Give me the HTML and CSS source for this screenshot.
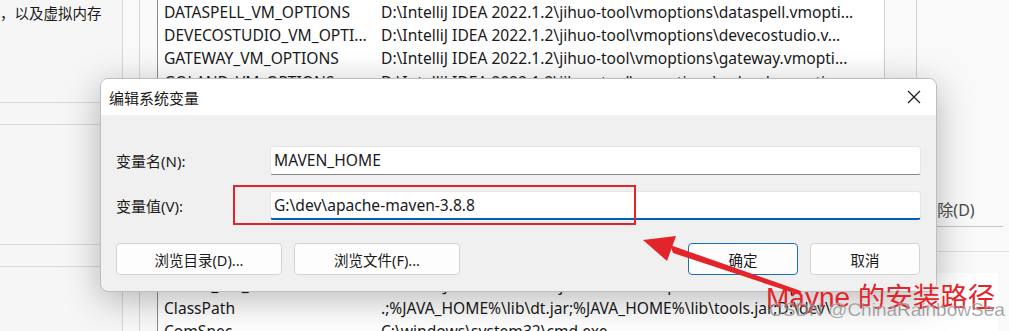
FILE: index.html
```html
<!DOCTYPE html>
<html lang="zh-CN">

<head>
    <meta charset="UTF-8">
    <title>编辑系统变量</title>
    <link rel="stylesheet" href="styles.css">
</head>

<body>
    <div class="desk">
        <div class="side">
            <p class="side-text">，以及虚拟内存</p>
            <div class="side-box side-box-top"></div>
            <div class="side-box side-box-low"></div>
        </div>
        <div class="rail"></div>
        <div class="main">
            <div class="top-section">
                <div class="var-list">
                    <div class="row"><span class="col-name">DATASPELL_VM_OPTIONS</span><span class="col-value">D:\IntelliJ IDEA 2022.1.2\jihuo-tool\vmoptions\dataspell.vmopti...</span></div>
                    <div class="row"><span class="col-name">DEVECOSTUDIO_VM_OPTI...</span><span class="col-value">D:\IntelliJ IDEA 2022.1.2\jihuo-tool\vmoptions\devecostudio.v...</span></div>
                    <div class="row"><span class="col-name">GATEWAY_VM_OPTIONS</span><span class="col-value">D:\IntelliJ IDEA 2022.1.2\jihuo-tool\vmoptions\gateway.vmopti...</span></div>
                    <div class="row"><span class="col-name">GOLAND_VM_OPTIONS</span><span class="col-value">D:\IntelliJ IDEA 2022.1.2\jihuo-tool\vmoptions\goland.vmoptio...</span></div>
                </div>
                <div class="scroll-rail"></div>
            </div>
            <div class="mid-section">
                <div class="bg-buttons">
                    <div class="bg-button">删除(D)</div>
                </div>
                <div class="bg-rule"></div>
            </div>
            <div class="var-list var-list-low">
                <div class="row"><span class="col-name">CLION_VM_OPTIONS</span><span class="col-value">D:\IntelliJ IDEA 2022.1.2\jihuo-tool\vmoptions\clion.vmoptions</span></div>
                <div class="row"><span class="col-name">ClassPath</span><span class="col-value">.;%JAVA_HOME%\lib\dt.jar;%JAVA_HOME%\lib\tools.jar;D:\dev\</span></div>
                <div class="row"><span class="col-name">ComSpec</span><span class="col-value">C:\windows\system32\cmd.exe</span></div>
            </div>
        </div>
    </div>

    <div class="dialog">
        <div class="dialog-title">
            <span>编辑系统变量</span>
            <svg class="close-icon" width="14" height="14" viewBox="0 0 14 14">
                <path d="M1 1 L13 13 M13 1 L1 13" stroke="#1a1a1a" stroke-width="1.2" fill="none" />
            </svg>
        </div>
        <div class="dialog-body">
            <div class="field">
                <label class="field-label">变量名(N):</label>
                <div class="field-input">MAVEN_HOME</div>
            </div>
            <div class="field">
                <label class="field-label">变量值(V):</label>
                <div class="field-input field-input-active">G:\dev\apache-maven-3.8.8</div>
            </div>
            <div class="dialog-actions">
                <div class="action-group">
                    <button class="btn btn-wide">浏览目录(D)...</button>
                    <button class="btn btn-wide">浏览文件(F)...</button>
                </div>
                <div class="action-group">
                    <button class="btn btn-ok">确定</button>
                    <button class="btn">取消</button>
                </div>
            </div>
        </div>
    </div>

    <!-- annotations drawn on top of the screenshot -->
    <div class="mark-box"></div>
    <svg class="arrow" width="1009" height="331" viewBox="0 0 1009 331">
        <polygon points="643,240 676,236 667,261" fill="#e3242b" />
        <polygon points="670,245 673,253 800,295 801,291" fill="#e3242b" />
    </svg>
    <div class="note">Mayne <span class="note-cjk">的安装路径</span></div>
    <div class="watermark">CSDN @ChinaRainbowSea</div>
</body>

</html>
```

FILE: styles.css
```css
body {
    margin: 0;
    font-family: "Noto Sans", "Noto Sans CJK SC", sans-serif;
    color: #1a1a1a;
    background-color: #f3f3f3;
    overflow: hidden;
}

.desk {
    display: flex;
    height: 331px;
    width: 1009px;
    overflow: hidden;
    background-color: #f9f9f9;
}

.side {
    width: 122px;
    flex-shrink: 0;
    border-right: 1px solid #d6d6d6;
    background-color: #f6f6f6;
    overflow: hidden;
}

.side-text {
    margin: 1px 0 0 0;
    font-size: 14.5px;
    line-height: 24px;
    white-space: nowrap;
}

.side-box {
    border-top: 1px solid #d8d8d8;
    border-bottom: 1px solid #d8d8d8;
    height: 21px;
}

.side-box-top {
    margin-top: 77px;
}

.side-box-low {
    margin-top: 119px;
}

.rail {
    width: 16px;
    flex-shrink: 0;
    border-right: 1px solid #d6d6d6;
}

.main {
    flex: 1;
    display: flex;
    flex-direction: column;
    padding-left: 17px;
    min-width: 0;
}

.top-section {
    display: flex;
    height: 165px;
}

.var-list {
    width: 726px;
    flex-shrink: 0;
    background-color: #fff;
    border-left: 1px solid #8a8a8a;
    border-right: 1px solid #d0d0d0;
    overflow: hidden;
}

.row {
    display: flex;
    height: 23.4px;
    align-items: center;
    font-size: 15.6px;
    white-space: nowrap;
}

.col-name {
    width: 217px;
    padding-left: 6px;
    flex-shrink: 0;
    overflow: hidden;
}

.col-value {
    overflow: hidden;
}

.scroll-rail {
    width: 31px;
    border-right: 1px solid #d0d0d0;
}

.mid-section {
    height: 108px;
    display: flex;
    flex-direction: column;
}

.bg-buttons {
    display: flex;
    justify-content: flex-end;
    margin-top: 30px;
}

.bg-button {
    width: 110px;
    height: 31px;
    margin-right: 6px;
    border-bottom: 1px solid #c4c4c4;
    font-size: 16px;
    line-height: 31px;
    text-align: center;
    color: #4a4a4a;
}

.bg-rule {
    margin-top: 24px;
    border-top: 1px solid #dedede;
}

.var-list-low {
    width: 840px;
    flex: 1;
    border-right: none;
}

/* dialog window */
.dialog {
    position: absolute;
    left: 100px;
    top: 78px;
    width: 835px;
    height: 212px;
    border: 1px solid #bdbdbd;
    border-radius: 8px;
    background-color: #f0f0f0;
    box-shadow: 0 8px 36px rgba(0, 0, 0, 0.28);
    overflow: hidden;
}

.dialog-title {
    display: flex;
    justify-content: space-between;
    align-items: center;
    height: 36px;
    padding: 0 15px 0 8px;
    background-color: #fff;
    font-size: 15px;
}

.close-icon {
    display: block;
}

.dialog-body {
    padding: 31px 15px 0 15px;
}

.field {
    display: flex;
    align-items: center;
    margin-bottom: 16px;
}

.field-label {
    width: 154px;
    font-size: 15px;
}

.field-input {
    flex: 1;
    height: 27px;
    padding-left: 3px;
    background-color: #fff;
    border: 1px solid #e6e6e6;
    border-bottom-color: #868686;
    border-radius: 3px;
    font-size: 15.6px;
    line-height: 27px;
}

.field-input-active {
    border-bottom: 2px solid #005fb8;
    height: 26px;
}

.dialog-actions {
    display: flex;
    justify-content: space-between;
    margin-top: 23px;
    padding-right: 1px;
}

.action-group {
    display: flex;
    gap: 12px;
}

.btn {
    width: 110px;
    height: 32px;
    padding: 0;
    border: 1px solid #d3d3d3;
    border-radius: 4px;
    background-color: #fdfdfd;
    font-family: inherit;
    font-size: 14.5px;
    color: #1a1a1a;
}

.btn-wide {
    width: 166px;
}

.btn-ok {
    border-color: #1a6dc0;
}

/* annotations */
.mark-box {
    position: absolute;
    left: 233px;
    top: 185px;
    width: 399px;
    height: 36px;
    border: 2px solid #e3242b;
}

.arrow {
    position: absolute;
    left: 0;
    top: 0;
}

.note {
    position: absolute;
    left: 766px;
    top: 277px;
    font-family: "Liberation Sans", "Noto Sans CJK SC", sans-serif;
    font-size: 28px;
    line-height: 36px;
    color: #e3242b;
    white-space: nowrap;
}

.note-cjk {
    font-family: "Noto Sans CJK SC", sans-serif;
    font-size: 27.5px;
}

.watermark {
    position: absolute;
    left: 769px;
    top: 299px;
    font-family: "Liberation Sans", sans-serif;
    font-size: 19px;
    color: rgba(120, 120, 120, 0.75);
    -webkit-text-stroke: 0.3px rgba(255, 255, 255, 0.6);
    white-space: nowrap;
}
```
